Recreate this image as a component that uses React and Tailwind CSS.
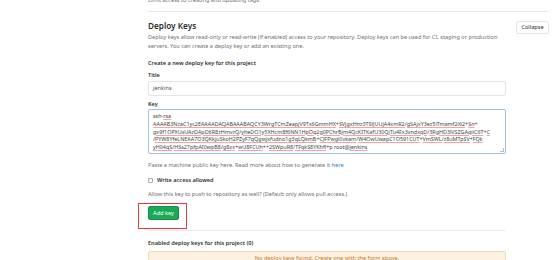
import React from 'react'

const KEY_LINES = [
  'ssh-rsa',
  'AAAAB3NzaC1yc2EAAAADAQABAAABAQCY3WrgTCmZeapjV9Tx6GmmHX+SVjgxHnz3T9lJUUjA4xmR2/gSAjxY3ez5lTmamf2i62+Sn+',
  'gx9f1OPXUsUAzDApD6R8zHmvzQ/yheDO1y5XHcm8f6NN1HpOq2g0PChrBjm4QcKITKafU30QjTu4Fx3vndxqD/3RgHD3lVSZGAqiiC6T+C',
  '/PYW8YfeLNEAA7O3QKkjuSkoH2PZyF7qQgwjxfudno1g3qLQkmB+CJFPwgi0vkam/W4OwUwapC1O591CUT+VmSWL/z8uMTpSV+FQk',
  'yH04qS/HSs27pfpAI0wpB8/g8xx+wU8FCUh++2SWpuR8/TFqkS8YKhfl+p root@jenkins',
]

// words the spellchecker leaves alone
const PLAIN = new Set(['ssh', 'p', 'root'])

function KeyLine({ text }) {
  const parts = text.split(/([A-Za-z0-9]+)/)
  return (
    <div className="whitespace-nowrap h-[7.8px] leading-[7.8px]">
      {parts.map((p, i) =>
        /^[A-Za-z0-9]+$/.test(p) && !PLAIN.has(p) ? (
          <span key={i} className="underline decoration-[#f3a3a3] decoration-1 underline-offset-[1px]">
            {p}
          </span>
        ) : (
          <span key={i}>{p}</span>
        )
      )}
    </div>
  )
}

export default function App() {
  return (
    <div
      className="w-[560px] h-[260px] overflow-hidden bg-white text-[#2e2e2e] pl-[148px]"
      style={{ fontFamily: '"Noto Sans", "Open Sans", sans-serif' }}
    >
      {/* previous section tail */}
      <p className="-mt-[4px] h-[8px] text-[5.6px] leading-[8px] text-[#707070]">
        Limit access to creating and updating tags.
      </p>
      <div className="mt-[7px] w-[400px] border-t border-[#eaeaea]" />

      {/* Section header */}
      <div className="flex w-[401px] items-start justify-between">
        <div className="w-[358px]">
          <h2 className="mt-[8px] h-[12px] text-[8.2px] leading-[12px] font-semibold text-[#2e2e2e]">Deploy Keys</h2>
          <p className="mt-[1px] text-[5.6px] leading-[9px] text-[#707070]">
            Deploy keys allow read-only or read-write (if enabled) access to your repository. Deploy keys can be used for CI, staging or production servers. You can create a deploy key or add an existing one.
          </p>
        </div>
        <button className="mt-[9px] h-[13px] w-[33px] rounded-[2px] border border-[#e5e5e5] bg-white text-[5.6px] leading-none text-[#2e2e2e]">
          Collapse
        </button>
      </div>

      {/* Form */}
      <div className="w-[358px]">
        <p className="mt-[8px] h-[9px] text-[5.6px] leading-[9px] font-semibold">Create a new deploy key for this project</p>
        <p className="mt-[3px] h-[9px] text-[5.6px] leading-[9px] font-semibold">Title</p>
        <div className="mt-[1px] flex h-[15px] items-center rounded-[2px] border border-[#e5e5e5] px-[4px] text-[5.6px] text-[#555]">
          jenkins
        </div>
        <p className="mt-[4px] h-[9px] text-[5.6px] leading-[9px] font-semibold">Key</p>
        <div className="relative h-[45px] overflow-hidden rounded-[2px] border border-[#9cc3ec] pl-[4px] pt-[3px] text-[5.4px] text-[#444]">
          {KEY_LINES.map((l, i) => (
            <KeyLine key={i} text={l} />
          ))}
          <span className="absolute bottom-[1px] right-[1px] h-[4px] w-[4px] border-r border-b border-[#bbb]" />
        </div>
        <p className="mt-[7px] h-[9px] text-[5.6px] leading-[9px] text-[#707070]">
          Paste a machine public key here. Read more about how to generate it <span className="text-[#1f78d1]">here</span>
        </p>
        <div className="mt-[6px] flex h-[9px] items-center gap-[4px]">
          <span className="h-[5px] w-[5px] rounded-[1px] border border-[#aaa] bg-white" />
          <span className="text-[5.6px] leading-[9px] font-semibold">Write access allowed</span>
        </div>
        <p className="mt-[5px] h-[9px] text-[5.6px] leading-[9px] text-[#707070]">
          Allow this key to push to repository as well? (Default only allows pull access.)
        </p>

        <div className="relative mt-[7px] w-[31px]">
          <button className="flex h-[14px] w-[31px] items-center justify-center rounded-[2px] border border-[#168f48] bg-[#1aaa55] text-[5.6px] text-white">
            Add key
          </button>
          {/* annotation frame */}
          <span className="absolute -left-[10px] -top-[3px] h-[26px] w-[49px] border-[1.5px] border-[#e23b3b]" />
        </div>

        <div className="mt-[10px] border-t border-[#eaeaea]" />
        <p className="mt-[8px] h-[9px] text-[5.6px] leading-[9px] font-semibold">Enabled deploy keys for this project (0)</p>
        <div className="mt-[3px] flex h-[14px] items-center justify-center rounded-[2px] border border-[#f5d9b0] bg-[#fdf1e1] text-[5.6px] text-[#c17d36]">
          No deploy keys found. Create one with the form above.
        </div>
      </div>
    </div>
  )
}
